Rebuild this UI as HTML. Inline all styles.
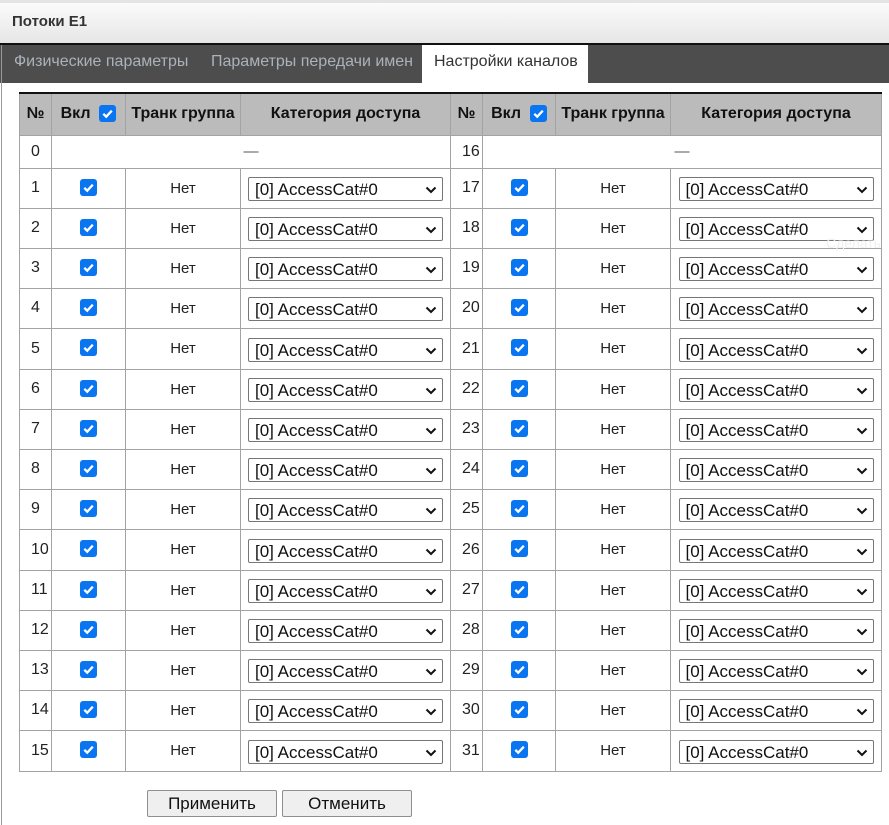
<!DOCTYPE html>
<html><head><meta charset="utf-8"><style>
*{box-sizing:border-box}
body{margin:0;width:889px;height:825px;overflow:hidden;background:#fff;font-family:"Liberation Sans","DejaVu Sans",sans-serif;position:relative}
.hdr{position:absolute;left:0;top:0;width:889px;height:45px;background:linear-gradient(#fbfbfb,#e6e6e6);border-top:3px solid #e4e4e4;border-bottom:2px solid #111}
.hdr b{position:absolute;left:12px;top:10px;font-size:15px;color:#333}
.lline{position:absolute;left:1px;top:45px;width:1px;height:780px;background:#9a9a9a}
.tabs{position:absolute;left:0;top:45px;width:889px;height:38px;background:#4d4d4d}
.tab{position:absolute;top:0;height:38px;line-height:34px;font-size:16px;color:#aab2ba}
.tab.act{background:#fff;color:#333}
table{position:absolute;left:19px;top:92px;border-collapse:collapse;table-layout:fixed;font-size:15px;color:#222}
td,th{border:1px solid #a3a3a3;text-align:center;padding:0}
tr.h th{background:#bbb;font-size:16px;font-weight:bold;color:#111;border-top:2px solid #111;height:42px}
td.n{text-align:left;padding-left:11px;font-size:16px}
.cb{display:inline-block;width:17px;height:17px;background:#0a75f0;border-radius:3px;vertical-align:middle;position:relative;top:-1px}
.cb svg{position:absolute;left:0;top:0}
.sel{display:inline-block;width:195px;height:24px;border:1px solid #767676;border-radius:2px;text-align:left;padding-left:6px;font-size:17px;line-height:24px;position:relative;vertical-align:middle;color:#111;top:1px}
.sel svg{position:absolute;right:5px;top:8px}
.btn{position:absolute;top:790px;height:27px;width:130px;border:1px solid #8f8f8f;border-radius:2px;background:#efefef;font-size:17px;text-align:center;line-height:25px;color:#111}
</style></head><body>
<div class="hdr"><b>Потоки E1</b></div>
<div class="tabs">
<div class="tab" style="left:14px">Физические параметры</div>
<div class="tab" style="left:211px">Параметры передачи имен</div>
<div class="tab act" style="left:422px;width:166px;padding-left:12px">Настройки каналов</div>
</div>
<div class="lline"></div>
<table>
<colgroup><col style="width:32px"><col style="width:74px"><col style="width:115px"><col style="width:210px"><col style="width:32px"><col style="width:73px"><col style="width:115px"><col style="width:211px"></colgroup>
<tr class="h"><th>№</th><th>Вкл&nbsp; <span class="cb"><svg width="17" height="17"><path d="M4.3 8.8l2.9 2.9 5.6-6" stroke="#fff" stroke-width="2.3" fill="none"/></svg></span></th><th>Транк группа</th><th>Категория доступа</th><th>№</th><th>Вкл&nbsp; <span class="cb"><svg width="17" height="17"><path d="M4.3 8.8l2.9 2.9 5.6-6" stroke="#fff" stroke-width="2.3" fill="none"/></svg></span></th><th>Транк группа</th><th>Категория доступа</th></tr>
<tr style="height:33px"><td class="n">0</td><td colspan="3" style="color:#555">—</td><td class="n">16</td><td colspan="3" style="color:#555">—</td></tr>
<tr style="height:40px"><td class="n">1</td><td><span class="cb"><svg width="17" height="17"><path d="M4.3 8.8l2.9 2.9 5.6-6" stroke="#fff" stroke-width="2.3" fill="none"/></svg></span></td><td>Нет</td><td><span class="sel">[0] AccessCat#0<svg width="12" height="8"><path d="M1.5 1.5l4.5 4.5 4.5-4.5" stroke="#111" stroke-width="2" fill="none"/></svg></span></td><td class="n">17</td><td><span class="cb"><svg width="17" height="17"><path d="M4.3 8.8l2.9 2.9 5.6-6" stroke="#fff" stroke-width="2.3" fill="none"/></svg></span></td><td>Нет</td><td><span class="sel">[0] AccessCat#0<svg width="12" height="8"><path d="M1.5 1.5l4.5 4.5 4.5-4.5" stroke="#111" stroke-width="2" fill="none"/></svg></span></td></tr>
<tr style="height:40px"><td class="n">2</td><td><span class="cb"><svg width="17" height="17"><path d="M4.3 8.8l2.9 2.9 5.6-6" stroke="#fff" stroke-width="2.3" fill="none"/></svg></span></td><td>Нет</td><td><span class="sel">[0] AccessCat#0<svg width="12" height="8"><path d="M1.5 1.5l4.5 4.5 4.5-4.5" stroke="#111" stroke-width="2" fill="none"/></svg></span></td><td class="n">18</td><td><span class="cb"><svg width="17" height="17"><path d="M4.3 8.8l2.9 2.9 5.6-6" stroke="#fff" stroke-width="2.3" fill="none"/></svg></span></td><td>Нет</td><td><span class="sel">[0] AccessCat#0<svg width="12" height="8"><path d="M1.5 1.5l4.5 4.5 4.5-4.5" stroke="#111" stroke-width="2" fill="none"/></svg></span></td></tr>
<tr style="height:40px"><td class="n">3</td><td><span class="cb"><svg width="17" height="17"><path d="M4.3 8.8l2.9 2.9 5.6-6" stroke="#fff" stroke-width="2.3" fill="none"/></svg></span></td><td>Нет</td><td><span class="sel">[0] AccessCat#0<svg width="12" height="8"><path d="M1.5 1.5l4.5 4.5 4.5-4.5" stroke="#111" stroke-width="2" fill="none"/></svg></span></td><td class="n">19</td><td><span class="cb"><svg width="17" height="17"><path d="M4.3 8.8l2.9 2.9 5.6-6" stroke="#fff" stroke-width="2.3" fill="none"/></svg></span></td><td>Нет</td><td><span class="sel">[0] AccessCat#0<svg width="12" height="8"><path d="M1.5 1.5l4.5 4.5 4.5-4.5" stroke="#111" stroke-width="2" fill="none"/></svg></span></td></tr>
<tr style="height:40px"><td class="n">4</td><td><span class="cb"><svg width="17" height="17"><path d="M4.3 8.8l2.9 2.9 5.6-6" stroke="#fff" stroke-width="2.3" fill="none"/></svg></span></td><td>Нет</td><td><span class="sel">[0] AccessCat#0<svg width="12" height="8"><path d="M1.5 1.5l4.5 4.5 4.5-4.5" stroke="#111" stroke-width="2" fill="none"/></svg></span></td><td class="n">20</td><td><span class="cb"><svg width="17" height="17"><path d="M4.3 8.8l2.9 2.9 5.6-6" stroke="#fff" stroke-width="2.3" fill="none"/></svg></span></td><td>Нет</td><td><span class="sel">[0] AccessCat#0<svg width="12" height="8"><path d="M1.5 1.5l4.5 4.5 4.5-4.5" stroke="#111" stroke-width="2" fill="none"/></svg></span></td></tr>
<tr style="height:41px"><td class="n">5</td><td><span class="cb"><svg width="17" height="17"><path d="M4.3 8.8l2.9 2.9 5.6-6" stroke="#fff" stroke-width="2.3" fill="none"/></svg></span></td><td>Нет</td><td><span class="sel">[0] AccessCat#0<svg width="12" height="8"><path d="M1.5 1.5l4.5 4.5 4.5-4.5" stroke="#111" stroke-width="2" fill="none"/></svg></span></td><td class="n">21</td><td><span class="cb"><svg width="17" height="17"><path d="M4.3 8.8l2.9 2.9 5.6-6" stroke="#fff" stroke-width="2.3" fill="none"/></svg></span></td><td>Нет</td><td><span class="sel">[0] AccessCat#0<svg width="12" height="8"><path d="M1.5 1.5l4.5 4.5 4.5-4.5" stroke="#111" stroke-width="2" fill="none"/></svg></span></td></tr>
<tr style="height:40px"><td class="n">6</td><td><span class="cb"><svg width="17" height="17"><path d="M4.3 8.8l2.9 2.9 5.6-6" stroke="#fff" stroke-width="2.3" fill="none"/></svg></span></td><td>Нет</td><td><span class="sel">[0] AccessCat#0<svg width="12" height="8"><path d="M1.5 1.5l4.5 4.5 4.5-4.5" stroke="#111" stroke-width="2" fill="none"/></svg></span></td><td class="n">22</td><td><span class="cb"><svg width="17" height="17"><path d="M4.3 8.8l2.9 2.9 5.6-6" stroke="#fff" stroke-width="2.3" fill="none"/></svg></span></td><td>Нет</td><td><span class="sel">[0] AccessCat#0<svg width="12" height="8"><path d="M1.5 1.5l4.5 4.5 4.5-4.5" stroke="#111" stroke-width="2" fill="none"/></svg></span></td></tr>
<tr style="height:40px"><td class="n">7</td><td><span class="cb"><svg width="17" height="17"><path d="M4.3 8.8l2.9 2.9 5.6-6" stroke="#fff" stroke-width="2.3" fill="none"/></svg></span></td><td>Нет</td><td><span class="sel">[0] AccessCat#0<svg width="12" height="8"><path d="M1.5 1.5l4.5 4.5 4.5-4.5" stroke="#111" stroke-width="2" fill="none"/></svg></span></td><td class="n">23</td><td><span class="cb"><svg width="17" height="17"><path d="M4.3 8.8l2.9 2.9 5.6-6" stroke="#fff" stroke-width="2.3" fill="none"/></svg></span></td><td>Нет</td><td><span class="sel">[0] AccessCat#0<svg width="12" height="8"><path d="M1.5 1.5l4.5 4.5 4.5-4.5" stroke="#111" stroke-width="2" fill="none"/></svg></span></td></tr>
<tr style="height:40px"><td class="n">8</td><td><span class="cb"><svg width="17" height="17"><path d="M4.3 8.8l2.9 2.9 5.6-6" stroke="#fff" stroke-width="2.3" fill="none"/></svg></span></td><td>Нет</td><td><span class="sel">[0] AccessCat#0<svg width="12" height="8"><path d="M1.5 1.5l4.5 4.5 4.5-4.5" stroke="#111" stroke-width="2" fill="none"/></svg></span></td><td class="n">24</td><td><span class="cb"><svg width="17" height="17"><path d="M4.3 8.8l2.9 2.9 5.6-6" stroke="#fff" stroke-width="2.3" fill="none"/></svg></span></td><td>Нет</td><td><span class="sel">[0] AccessCat#0<svg width="12" height="8"><path d="M1.5 1.5l4.5 4.5 4.5-4.5" stroke="#111" stroke-width="2" fill="none"/></svg></span></td></tr>
<tr style="height:40px"><td class="n">9</td><td><span class="cb"><svg width="17" height="17"><path d="M4.3 8.8l2.9 2.9 5.6-6" stroke="#fff" stroke-width="2.3" fill="none"/></svg></span></td><td>Нет</td><td><span class="sel">[0] AccessCat#0<svg width="12" height="8"><path d="M1.5 1.5l4.5 4.5 4.5-4.5" stroke="#111" stroke-width="2" fill="none"/></svg></span></td><td class="n">25</td><td><span class="cb"><svg width="17" height="17"><path d="M4.3 8.8l2.9 2.9 5.6-6" stroke="#fff" stroke-width="2.3" fill="none"/></svg></span></td><td>Нет</td><td><span class="sel">[0] AccessCat#0<svg width="12" height="8"><path d="M1.5 1.5l4.5 4.5 4.5-4.5" stroke="#111" stroke-width="2" fill="none"/></svg></span></td></tr>
<tr style="height:41px"><td class="n">10</td><td><span class="cb"><svg width="17" height="17"><path d="M4.3 8.8l2.9 2.9 5.6-6" stroke="#fff" stroke-width="2.3" fill="none"/></svg></span></td><td>Нет</td><td><span class="sel">[0] AccessCat#0<svg width="12" height="8"><path d="M1.5 1.5l4.5 4.5 4.5-4.5" stroke="#111" stroke-width="2" fill="none"/></svg></span></td><td class="n">26</td><td><span class="cb"><svg width="17" height="17"><path d="M4.3 8.8l2.9 2.9 5.6-6" stroke="#fff" stroke-width="2.3" fill="none"/></svg></span></td><td>Нет</td><td><span class="sel">[0] AccessCat#0<svg width="12" height="8"><path d="M1.5 1.5l4.5 4.5 4.5-4.5" stroke="#111" stroke-width="2" fill="none"/></svg></span></td></tr>
<tr style="height:40px"><td class="n">11</td><td><span class="cb"><svg width="17" height="17"><path d="M4.3 8.8l2.9 2.9 5.6-6" stroke="#fff" stroke-width="2.3" fill="none"/></svg></span></td><td>Нет</td><td><span class="sel">[0] AccessCat#0<svg width="12" height="8"><path d="M1.5 1.5l4.5 4.5 4.5-4.5" stroke="#111" stroke-width="2" fill="none"/></svg></span></td><td class="n">27</td><td><span class="cb"><svg width="17" height="17"><path d="M4.3 8.8l2.9 2.9 5.6-6" stroke="#fff" stroke-width="2.3" fill="none"/></svg></span></td><td>Нет</td><td><span class="sel">[0] AccessCat#0<svg width="12" height="8"><path d="M1.5 1.5l4.5 4.5 4.5-4.5" stroke="#111" stroke-width="2" fill="none"/></svg></span></td></tr>
<tr style="height:40px"><td class="n">12</td><td><span class="cb"><svg width="17" height="17"><path d="M4.3 8.8l2.9 2.9 5.6-6" stroke="#fff" stroke-width="2.3" fill="none"/></svg></span></td><td>Нет</td><td><span class="sel">[0] AccessCat#0<svg width="12" height="8"><path d="M1.5 1.5l4.5 4.5 4.5-4.5" stroke="#111" stroke-width="2" fill="none"/></svg></span></td><td class="n">28</td><td><span class="cb"><svg width="17" height="17"><path d="M4.3 8.8l2.9 2.9 5.6-6" stroke="#fff" stroke-width="2.3" fill="none"/></svg></span></td><td>Нет</td><td><span class="sel">[0] AccessCat#0<svg width="12" height="8"><path d="M1.5 1.5l4.5 4.5 4.5-4.5" stroke="#111" stroke-width="2" fill="none"/></svg></span></td></tr>
<tr style="height:40px"><td class="n">13</td><td><span class="cb"><svg width="17" height="17"><path d="M4.3 8.8l2.9 2.9 5.6-6" stroke="#fff" stroke-width="2.3" fill="none"/></svg></span></td><td>Нет</td><td><span class="sel">[0] AccessCat#0<svg width="12" height="8"><path d="M1.5 1.5l4.5 4.5 4.5-4.5" stroke="#111" stroke-width="2" fill="none"/></svg></span></td><td class="n">29</td><td><span class="cb"><svg width="17" height="17"><path d="M4.3 8.8l2.9 2.9 5.6-6" stroke="#fff" stroke-width="2.3" fill="none"/></svg></span></td><td>Нет</td><td><span class="sel">[0] AccessCat#0<svg width="12" height="8"><path d="M1.5 1.5l4.5 4.5 4.5-4.5" stroke="#111" stroke-width="2" fill="none"/></svg></span></td></tr>
<tr style="height:40px"><td class="n">14</td><td><span class="cb"><svg width="17" height="17"><path d="M4.3 8.8l2.9 2.9 5.6-6" stroke="#fff" stroke-width="2.3" fill="none"/></svg></span></td><td>Нет</td><td><span class="sel">[0] AccessCat#0<svg width="12" height="8"><path d="M1.5 1.5l4.5 4.5 4.5-4.5" stroke="#111" stroke-width="2" fill="none"/></svg></span></td><td class="n">30</td><td><span class="cb"><svg width="17" height="17"><path d="M4.3 8.8l2.9 2.9 5.6-6" stroke="#fff" stroke-width="2.3" fill="none"/></svg></span></td><td>Нет</td><td><span class="sel">[0] AccessCat#0<svg width="12" height="8"><path d="M1.5 1.5l4.5 4.5 4.5-4.5" stroke="#111" stroke-width="2" fill="none"/></svg></span></td></tr>
<tr style="height:41px"><td class="n">15</td><td><span class="cb"><svg width="17" height="17"><path d="M4.3 8.8l2.9 2.9 5.6-6" stroke="#fff" stroke-width="2.3" fill="none"/></svg></span></td><td>Нет</td><td><span class="sel">[0] AccessCat#0<svg width="12" height="8"><path d="M1.5 1.5l4.5 4.5 4.5-4.5" stroke="#111" stroke-width="2" fill="none"/></svg></span></td><td class="n">31</td><td><span class="cb"><svg width="17" height="17"><path d="M4.3 8.8l2.9 2.9 5.6-6" stroke="#fff" stroke-width="2.3" fill="none"/></svg></span></td><td>Нет</td><td><span class="sel">[0] AccessCat#0<svg width="12" height="8"><path d="M1.5 1.5l4.5 4.5 4.5-4.5" stroke="#111" stroke-width="2" fill="none"/></svg></span></td></tr>
</table>
<div style="position:absolute;left:826px;top:235px;font-size:14px;color:#f0f0f0">Сделать</div>
<div class="btn" style="left:147px">Применить</div>
<div class="btn" style="left:282px">Отменить</div>
</body></html>
